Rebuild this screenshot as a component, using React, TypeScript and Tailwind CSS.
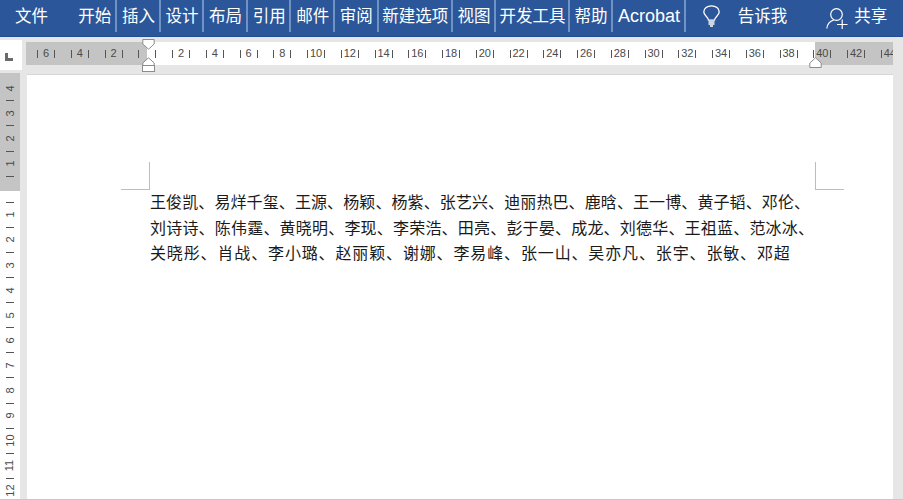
import React from 'react';

const TABS = [
  { label: '开始', w: 'w-[43.6px]', size: 'text-[16.5px]' },
  { label: '插入', w: 'w-[43.6px]', size: 'text-[16.5px]' },
  { label: '设计', w: 'w-[43.6px]', size: 'text-[16.5px]' },
  { label: '布局', w: 'w-[43.6px]', size: 'text-[16.5px]' },
  { label: '引用', w: 'w-[43.6px]', size: 'text-[16.5px]' },
  { label: '邮件', w: 'w-[43.6px]', size: 'text-[16.5px]' },
  { label: '审阅', w: 'w-[43.6px]', size: 'text-[16.5px]' },
  { label: '新建选项', w: 'w-[74px]', size: 'text-[16.5px]' },
  { label: '视图', w: 'w-[43.6px]', size: 'text-[16.5px]' },
  { label: '开发工具', w: 'w-[73.5px]', size: 'text-[16.5px]' },
  { label: '帮助', w: 'w-[43.6px]', size: 'text-[16.5px]' },
  { label: 'Acrobat', w: 'w-[72.5px]', size: 'text-[18px]' },
];

const LINES = [
  { text: '王俊凯、易烊千玺、王源、杨颖、杨紫、张艺兴、迪丽热巴、鹿晗、王一博、黄子韬、邓伦、', track: 'tracking-[0.1px]' },
  { text: '刘诗诗、陈伟霆、黄晓明、李现、李荣浩、田亮、彭于晏、成龙、刘德华、王祖蓝、范冰冰、', track: 'tracking-[0.2px]' },
  { text: '关晓彤、肖战、李小璐、赵丽颖、谢娜、李易峰、张一山、吴亦凡、张宇、张敏、邓超', track: 'tracking-[0.86px]' },
];

const H_LABELS = [6, 4, 2, 0, 2, 4, 6, 8, 10, 12, 14, 16, 18, 20, 22, 24, 26, 28, 30, 32, 34, 36, 38, 40, 42, 44];
const V_TOP = [4, 3, 2, 1];
const V_BOTTOM = [1, 2, 3, 4, 5, 6, 7, 8, 9, 10, 11, 12];

const Bulb = () => (
  <svg width="17" height="22" viewBox="0 0 17 22" fill="none" stroke="white" strokeWidth="1.3">
    <path d="M5.5 15 C5.5 12 0.8 10.5 0.8 6.8 A7.7 6.2 0 0 1 16.2 6.8 C16.2 10.5 11.5 12 11.5 15 Z" transform="translate(0 0.2)" />
    <path d="M5.5 17 H11.5 M5.5 19 H11.5 M7 21 H10" />
  </svg>
);

const UserPlus = () => (
  <svg width="22" height="21" viewBox="0 0 22 21" fill="none" stroke="white" strokeWidth="1.2">
    <circle cx="10.5" cy="6.5" r="5.8" />
    <path d="M0.8 20.5 C1.2 16 4 13.2 7.8 12" />
    <path d="M11 16.5 H21.5 M16.2 11.5 V21" />
  </svg>
);

const IndentMarker = ({ flip }: { flip?: boolean }) => (
  <svg width="13" height="11" viewBox="0 0 13 11" className={flip ? 'rotate-180' : ''} fill="white" stroke="#8c8c8c">
    <path d="M6.5 0.8 L12.2 6 V10.5 H0.8 V6 Z" />
  </svg>
);

const HRuler = () => (
  <div className="relative h-[23px] w-[867px] overflow-hidden bg-white">
    <div className="flex h-full">
      <div className="h-full w-[121px] bg-[#c4c4c4]" />
      <div className="flex-1" />
      <div className="h-full w-[78px] bg-[#c4c4c4]" />
    </div>
    <div className="absolute inset-0 flex items-center pl-[3.2px] text-[11px] text-[#4a4a4a]">
      {H_LABELS.map((n, i) => (
        <div key={i} className="flex h-full w-[33.75px] shrink-0 items-center justify-center">
          <span className="ml-[8px] h-[8px] w-px shrink-0 bg-[#555]" />
          <span className="w-[16px] shrink-0 text-center leading-none">{n === 0 ? '' : n}</span>
          <span className="mr-[8px] h-[8px] w-px shrink-0 bg-[#555]" />
        </div>
      ))}
    </div>
  </div>
);

const VTick = () => (
  <div className="flex h-[12.55px] items-center justify-center">
    <span className="h-px w-[8px] bg-[#555]" />
  </div>
);

const VLabel = ({ n }: { n: number }) => (
  <>
    <div className="flex h-[12.55px] items-center justify-center">
      <span className="rotate-[-90deg] text-[11px] leading-none text-[#4a4a4a]">{n}</span>
    </div>
    <VTick />
  </>
);

export default function App() {
  return (
    <div
      className="flex h-[500px] w-[903px] flex-col overflow-hidden border-b border-[#c8c8c8] bg-[#e6e6e6]"
      style={{ fontFamily: '"Liberation Sans", "Noto Sans CJK SC", sans-serif' }}
    >
      <div className="flex h-[37px] shrink-0 border-b border-[#1f4e96] bg-[#2b579a] text-[16.5px] leading-[24px] text-white">
        <div className="w-[73.5px] shrink-0 pl-[15px] pt-[4px]">文件</div>
        {TABS.map((t) => (
          <div key={t.label} className={`${t.w} ${t.size} h-[32px] shrink-0 whitespace-nowrap border-r-2 border-[#6f93c4] pl-[1px] pt-[4px] text-center`}>
            {t.label}
          </div>
        ))}
        <div className="ml-[17px] mt-[5px] shrink-0"><Bulb /></div>
        <div className="ml-[18px] shrink-0 pt-[4px]">告诉我</div>
        <div className="ml-[39px] mt-[8px] shrink-0"><UserPlus /></div>
        <div className="ml-[6px] shrink-0 pt-[4px]">共享</div>
      </div>

      <div className="relative flex h-[36px] shrink-0">
        <div className="mt-[3px] flex h-[30px] w-[22px] items-center bg-white pl-[5px] pt-[4px]">
          <span className="h-[8px] w-[8px] border-b-[3px] border-l-[3px] border-[#6a6a6a]" />
        </div>
        <div className="ml-[4px] mt-[5px]"><HRuler /></div>
        <div className="absolute left-[142px] top-[2px] flex flex-col items-center">
          <IndentMarker flip />
          <div className="mt-[7px]"><IndentMarker /></div>
          <div className="mt-[-3px] h-[7px] w-[13px] border border-[#8c8c8c] bg-white" />
        </div>
        <div className="absolute left-[809px] top-[20px]"><IndentMarker /></div>
      </div>

      <div className="flex min-h-0 flex-1">
        <div className="w-[20px] shrink-0 overflow-hidden bg-white">
          <div className="h-[118px] bg-[#c4c4c4] pt-[9px]">
            {V_TOP.map((n) => <VLabel key={n} n={n} />)}
          </div>
          <div className="pt-[5px]">
            <VTick />
            {V_BOTTOM.map((n) => <VLabel key={n} n={n} />)}
          </div>
        </div>
        <div className="ml-[6.5px] mt-[1px] w-[866.5px] border-t border-[#d6d6d6] bg-white pt-[87px]">
          <div className="ml-[94.5px] flex w-[723px] justify-between">
            <div className="h-[28px] w-[29px] border-b border-r border-[#bdbdbd]" />
            <div className="h-[28px] w-[29px] border-b border-l border-[#bdbdbd]" />
          </div>
          <div className="ml-[123.5px] text-[16px] leading-[25.5px] text-[#1a1a1a]">
            {LINES.map((l) => <div key={l.text} className={`${l.track} whitespace-nowrap`}>{l.text}</div>)}
          </div>
        </div>
      </div>
    </div>
  );
}
